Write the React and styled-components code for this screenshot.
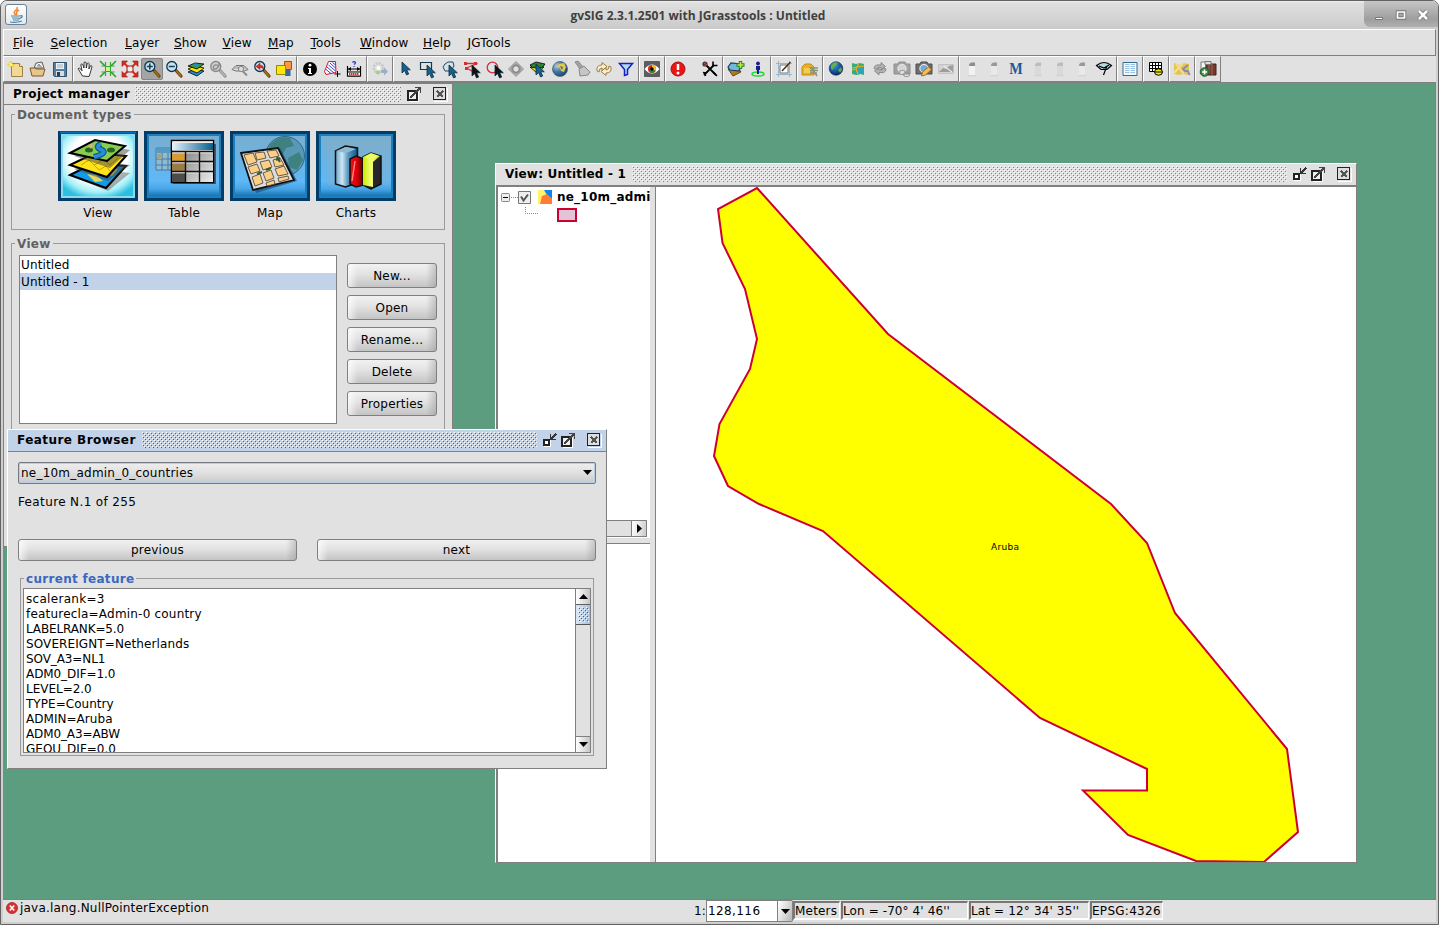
import React from 'react';
import styled, { createGlobalStyle, css } from 'styled-components';

const GlobalStyle = createGlobalStyle`
  * { box-sizing: border-box; }
  html, body { margin: 0; padding: 0; background: #fff; }
  body { font-family: "DejaVu Sans", sans-serif; font-size: 12px; color: #000; overflow: hidden; }
  svg { display: block; overflow: visible; flex: none; }
`;

const GRAY = '#808080';
const PANEL = '#e1e1e1';
const SELECT = '#c2d2e8';

/* ---------- application frame ---------- */
const Frame = styled.div`
  width: 1439px; height: 925px;
  display: flex; flex-direction: column;
  border: 1px solid #626262;
  border-radius: 7px 7px 0 0;
  background: #cfcfcf; overflow: hidden;
`;
const TitleStrip = styled.header`
  height: 28px; flex: none; display: flex; align-items: stretch;
  background: linear-gradient(#f0f0f0 0, #dfdfdf 2px, #d4d4d4 60%, #cacaca 100%);
`;
const JavaBadge = styled.div`
  width: 22px; height: 21px; margin: 3px 0 0 4px;
  border: 1px solid #68839b; border-radius: 3px;
  background: linear-gradient(#fff, #e4e9ed);
  display: flex; align-items: center; justify-content: center;
`;
const AppTitle = styled.h1`
  flex: 1; margin: 0; padding: 1px 0 0 5px; text-align: center;
  font: bold 12px/28px "Open Sans", "Noto Sans", sans-serif;
  letter-spacing: 0.03px; color: #404040;
`;
const WindowButtons = styled.div`
  width: 74px; height: 26px; display: flex; align-items: center; padding: 2px 0 0 10px;
  border-radius: 0 5px 0 6px;
  background: linear-gradient(#c6c6c6, #9e9e9e 70%, #b0b0b0);
`;
const Body = styled.div`
  flex: 1; margin: 0 2px 2px; display: flex; flex-direction: column; min-height: 0;
  background: ${PANEL};
`;
const MenuBar = styled.nav`
  height: 27px; flex: none; display: flex; align-items: center;
  border: 1px solid #fff; border-right-color: ${GRAY}; border-bottom-color: ${GRAY};
  padding: 0 0 0 9px;
`;
const MenuItem = styled.span`
  width: ${p => p.$w}px; flex: none; white-space: nowrap; letter-spacing: 0.18px;
  &::first-letter { text-decoration: underline; text-underline-offset: 1px; }
`;

/* ---------- toolbar ---------- */
const ToolBar = styled.div`
  height: 27px; flex: none; display: flex; border-bottom: 1px solid ${GRAY};
`;
const ToolGroup = styled.div`
  display: flex; align-items: center; padding: 0 1px 1px; gap: ${p => p.$gap || 0}px;
  border: 1px solid #fff; border-right-color: ${GRAY}; border-bottom-color: ${GRAY};
`;
const ToolButton = styled.div`
  width: 22px; height: 22px; display: flex; align-items: center; justify-content: center;
  ${p => p.$on && css`background: #a4a4a4; border: 1px solid #858585; border-radius: 2px;`}
`;

/* ---------- internal windows ---------- */
const Desktop = styled.main`
  flex: 1; position: relative; background: #5c9c7f; min-height: 0;
  border-right: 1px solid ${GRAY};
`;
const InternalFrame = styled.section`
  position: absolute; left: ${p => p.$x}px; top: ${p => p.$y}px;
  width: ${p => p.$w}px; height: ${p => p.$h}px;
  display: flex; flex-direction: column; background: ${PANEL};
  border: 1px solid #fff; border-right-color: ${GRAY}; border-bottom-color: ${GRAY};
  ${p => p.$flat && css`border-top-color: ${GRAY}; border-left-color: ${GRAY};`}
`;
const FrameTitle = styled.div`
  height: ${p => p.$h}px; flex: none; display: flex; align-items: center; padding: 0 5px 1px 9px;
  border-bottom: 1px solid ${GRAY}; background: ${p => (p.$active ? SELECT : PANEL)};
  font-weight: bold; white-space: nowrap;
`;
const FrameName = styled.span`letter-spacing: ${p => p.$ls}px; width: ${p => p.$w}px; flex: none;`;
const bumpTile = dark => css`
  background-image: url("data:image/svg+xml,%3Csvg xmlns='http://www.w3.org/2000/svg' width='4' height='4' shape-rendering='crispEdges'%3E%3Cpath fill='%23fff' d='M0 0h1v1H0zM2 2h1v1H2z'/%3E%3Cpath fill='%23${dark}' d='M1 1h1v1H1zM3 3h1v1H3z'/%3E%3C/svg%3E");
`;
const Bumps = styled.div`
  flex: 1; height: 16px; margin-right: 6px;
  ${p => bumpTile(p.$active ? '555f6c' : '808080')}
`;
const FrameIcons = styled.div`display: flex; gap: 4px; & > :last-child { margin-left: 8px; }`;

const Group = styled.fieldset`
  margin: ${p => p.$m}; padding: ${p => p.$p}; min-width: 0; height: ${p => p.$h}px;
  border: 1px solid #9a9a9a;
`;
const GroupName = styled.legend`
  margin-left: ${p => p.$ml ?? 3}px; padding: 0 2px; height: 15px; line-height: ${p => p.$lh || 15}px;
  font-weight: bold; color: ${p => p.$c || '#606060'}; letter-spacing: 0.3px;
`;
const DocTypes = styled.div`display: flex; justify-content: center; gap: 6px; padding-right: 2px;`;
const DocType = styled.div`display: flex; flex-direction: column; align-items: center; gap: 5px; line-height: 15px; letter-spacing: .2px;`;
const Columns = styled.div`display: flex; gap: 10px;`;
const DocList = styled.ul`
  margin: 0; padding: 0; list-style: none; width: 318px; height: 169px; flex: none;
  background: #fff; border: 1px solid ${GRAY};
`;
const DocRow = styled.li`
  height: 17px; line-height: 18px; padding-left: 1px; letter-spacing: .12px;
  background: ${p => (p.$on ? SELECT : 'transparent')};
`;
const ButtonColumn = styled.div`display: flex; flex-direction: column; gap: 7px; padding-top: 8px;`;
const Button = styled.div`
  width: ${p => p.$w}px; height: ${p => p.$h || 25}px; flex: none;
  display: flex; align-items: center; justify-content: center; letter-spacing: 0.2px;
  border: 1px solid ${GRAY}; border-radius: 3px;
  background: linear-gradient(90deg, #ffffffb0 0, #ffffff00 10px, #ffffff00 calc(100% - 10px), #9090906a 100%),
    linear-gradient(#f1f1f1 0, #e2e2e2 45%, #c4c4c4 100%);
`;

/* ---------- view window ---------- */
const ViewBody = styled.div`
  flex: 1; display: flex; min-height: 0; border-top: 1px solid ${GRAY}; border-left: 2px solid ${GRAY};
`;
const TocPane = styled.div`width: 152px; flex: none; display: flex; flex-direction: column; background: #fff;`;
const TocTree = styled.div`height: 333px; flex: none; padding-top: 1px;`;
const TocRow = styled.div`
  height: 18px; display: flex; align-items: center; padding-left: 3px; white-space: nowrap;
  font-weight: bold; letter-spacing: .22px;
`;
const TocLabel = styled.span`padding-left: 5px;`;
const HScroll = styled.div`
  height: 17px; flex: none; margin-right: 3px; display: flex; justify-content: flex-end;
  border: 1px solid ${GRAY}; background: ${PANEL};
`;
const PaneDivider = styled.div`height: 7px; flex: none; border-top: 1px solid #fff; border-bottom: 1px solid ${GRAY}; background: ${PANEL};`;
const SideDivider = styled.div`width: 6px; flex: none; background: ${PANEL}; border-right: 1px solid ${GRAY};`;
const ScrollButton = styled.div`
  width: 15px; height: 15px; flex: none;
  display: flex; align-items: center; justify-content: center;
  border-left: 1px solid ${GRAY};
  background: linear-gradient(100deg, #fff, #e2e2e2 60%, #c8c8c8);
`;
const MapPane = styled.div`flex: 1; background: #fff; overflow: hidden;`;

/* ---------- feature browser ---------- */
const BrowserBody = styled.div`flex: 1; padding: 10px 10px 0; display: flex; flex-direction: column;`;
const Combo = styled.div`
  height: 22px; flex: none; display: flex; align-items: center; justify-content: space-between;
  padding: 0 3px 1px 2px; border: 1px solid #76797f; border-radius: 2px; letter-spacing: .22px;
  box-shadow: inset 0 0 0 1px #b9cee6; background: linear-gradient(#eee, #e0e0e0 50%, #cacaca);
`;
const Counter = styled.div`height: 17px; margin: 10px 0 28px; line-height: 17px; letter-spacing: .37px;`;
const StepRow = styled.div`display: flex; gap: 20px;`;
const FeatureBox = styled.div`
  height: 165px; display: flex; background: #fff; border: 1px solid ${GRAY}; overflow: hidden;
`;
const FeatureLines = styled.div`flex: 1; padding: 3px 0 0 2px;`;
const FeatureLine = styled.div`height: 15px; line-height: 15px; letter-spacing: ${p => p.$ls}px;`;
const VScroll = styled.div`
  width: 16px; margin-right: -1px; display: flex; flex-direction: column; border: solid ${GRAY}; border-width: 0 1px; background: ${PANEL};
`;
const VScrollBtn = styled.div`
  height: 16px; flex: none; display: flex; align-items: center; justify-content: center;
  background: linear-gradient(90deg, #fff, #dedede 60%, #c4c4c4);
  border-bottom: 1px solid #606060;
  ${p => p.$end && css`margin-top: auto; border-top: 1px solid ${GRAY}; border-bottom: 0;`}
`;
const VThumb = styled.div`
  height: 20px; flex: none; padding: 2px 1px 2px 2px; display: flex; border-bottom: 1px solid #555;
  background: linear-gradient(90deg, #dbe6f3, #a9bfdb);
`;
const ThumbGrip = styled.div`flex: 1; ${bumpTile('555f6c')}`;

/* ---------- status bar ---------- */
const StatusBar = styled.footer`
  height: 23px; flex: none; display: flex; border-top: 1px solid ${GRAY};
`;
const StatusMessage = styled.div`
  width: 691px; height: 16px; display: flex; align-items: center; gap: 2px; padding-left: 3px; letter-spacing: .2px;
`;
const ScaleLabel = styled.span`width: 12px; line-height: 22px;`;
const ScaleInput = styled.div`
  width: 72px; height: 22px; line-height: 20px; padding-left: 1px; background: #fff; letter-spacing: .4px;
  border: 1px solid ${GRAY};
`;
const ScaleArrow = styled.div`
  width: 15px; height: 22px; display: flex; align-items: center; justify-content: center;
  border: 1px solid ${GRAY}; border-left: 0; border-radius: 0 2px 2px 0;
  background: linear-gradient(110deg, #fff, #ddd 50%, #b4b4b4);
`;
const StatusCell = styled.div`
  width: ${p => p.$w}px; height: 19px; margin: 1px 1px 0 0; line-height: 17px; white-space: nowrap;
  letter-spacing: ${p => p.$ls ?? 0.2}px;
  border: 1px solid #fff; border-top: 2px solid #777; border-left: 2px solid #777; border-bottom: 2px solid #fff;
`;

/* ---------- icons (16 x 16 grid) ---------- */
const Glass = ({ stroke = '#123449', fill = '#c5e3f4', handle = '#a36a1c', edge = '#5b3a0c', children }) => (
  <>
    <path d="M10.5 10l4.500 5" stroke={edge} strokeWidth="3.200" strokeLinecap="round" />
    <path d="M10.700 10.200l4.100 4.600" stroke={handle} strokeWidth="2" strokeLinecap="round" />
    <circle cx="5.800" cy="5.500" r="5" fill={fill} stroke={stroke} strokeWidth="1.300" />
    {children}
  </>
);
const Pointer = ({ x = 0, y = 0, fill = '#14638e' }) => (
  <path transform={`translate(${x} ${y})`} d="M0 0v11l2.600-2.400 2 4.400 2.100-1-2-4.200h3.600z" fill={fill} stroke="#082c42" strokeWidth=".8" />
);
const LayerStack = () => (
  <>
    <path d="M0 11l7-3 9 2-7 5z" fill="#1a8fe0" stroke="#000" strokeWidth=".8" />
    <path d="M0 8l7-3 9 2-7 5z" fill="#ffe400" stroke="#000" strokeWidth=".8" />
    <path d="M0 5l7-3 9 1-7 5z" fill="#3d9b32" stroke="#000" strokeWidth=".8" /><path d="M6 3l4 1-3 2" stroke="#268cc9" strokeWidth="1.500" fill="none" />
  </>
);
const Cyl = ({ c, cap }) => (
  <><path d="M5 14h7v1.200H4z" fill="#d2d2d2" /><path d="M5 5h6v9H5z" fill={c} /><path d="M5 5q0-3.500 3-3.500h3V5z" fill={cap} /></>
);
const Camera = ({ x = 0 }) => (
  <g transform={`translate(${x} 0)`}><path d="M0 3h4l1-2h6l1 2h4v10H0z" fill="#6e6e6e" stroke="#4d4d4d" /><circle cx="8" cy="7.500" r="4.200" fill="#ccc" stroke="#eee" /></g>
);

const icons = {
  fresh: <><path d="M3.500 2.500h8l3 3v10h-11z" fill="#f3d796" stroke="#a0803f" /><path d="M11.500 2.500v3h3" fill="#fff3cf" stroke="#a0803f" /><path d="M3 0v7M-.500 3.500h7M.800 1.300l4.400 4.400M5.200 1.300L.800 5.700" stroke="#e9c60c" strokeWidth=".9" /><circle cx="3" cy="3.500" r="1.500" fill="#fff58a" /></>,
  open: <><path d="M4 7l2-5 6-1 2 6z" fill="#ddd" stroke="#646464" /><path d="M6 5l3-3 4 4" fill="#999" stroke="#fff" /><path d="M0 7h5l1 1h9l-2 7H2z" fill="#e8c58a" stroke="#7b5826" /></>,
  save: <><path d="M1.500 1.500h13v14h-12l-1-1z" fill="#557f9e" stroke="#31546e" /><path d="M4 2h8v6H4z" fill="#e9eff3" /><path d="M5 4h6M5 6h6" stroke="#9fb0bc" /><path d="M4 10h8v5H4z" fill="#d6dde1" /><path d="M5 11h3v4H5z" fill="#273f50" /></>,
  hand: <path d="M4.500 15l-3-5-1.300-2.500q1.300-1 2.600.7l1.200 1.600L2.800 3.500q1-1.200 2 .1L6 7V1.600q1.100-1.300 2.100 0L8.300 7l1-4.700q1.200-1 1.900.3L10.900 8l1.600-3.200q1.400-.5 1.500.8l-1.800 6.500L11 15.500z" fill="#fff" stroke="#222" strokeWidth=".9" />,
  zin: <g><path d="M0 0l5 5M16 0l-5 5M0 16l5-5M16 16l-5-5" stroke="#27a02a" strokeWidth="1.500" /><path d="M1.500 5h4V1M14.500 5h-4V1M1.500 11h4v4M14.500 11h-4v4" stroke="#2aac2a" strokeWidth="1.200" fill="none" /><path d="M5.500 5.500h5v5h-5z" fill="#d5f591" stroke="#33a527" /></g>,
  zout: <g><path d="M5 5h6v6H5z" fill="#eee" stroke="#9d1f12" /><path d="M1 1l5 5M15 1l-5 5M1 15l5-5M15 15l-5-5" stroke="#d92c20" strokeWidth="2" /><path d="M0 0h5.500L0 5.500zM16 0h-5.500l5.500 5.500zM0 16h5.500L0 10.500zM16 16h-5.500l5.500-5.500z" fill="#dd2a1d" stroke="#8d1c12" strokeWidth=".6" /></g>,
  plus: <Glass><path d="M5.800 2.500v6M2.800 5.500h6" stroke="#16405c" strokeWidth="1.600" /></Glass>,
  minus: <Glass><path d="M2.800 5.500h6" stroke="#16405c" strokeWidth="1.600" /></Glass>,
  layers: <LayerStack />,
  glassGray: <Glass stroke="#888" fill="#d0d0d0" handle="#b5b5b5" edge="#858585"><path d="M3 7q1-4 4-3l2 1M9 2v3l-3 3H3" stroke="#888" strokeWidth="1.300" fill="none" /></Glass>,
  layerGray: <><path d="M0 8.500l4-4h8l4 4-4 1.500H4z" fill="#ddd" stroke="#555" strokeWidth=".8" /><path d="M4 4.500l6 5M12 4.500L6 9.500M2 7h12" stroke="#888" strokeWidth=".8" /><circle cx="9" cy="8" r="2.600" fill="#ddd" stroke="#777" strokeWidth=".8" /><path d="M11 10.500l4 4" stroke="#888" strokeWidth="1.800" /></>,
  glassBack: <Glass><path d="M2 5.500l4-3.300v2q4 0 3.500 4-1-2-3.500-1.800v2z" fill="#da2b23" stroke="#8e1b14" strokeWidth=".5" /></Glass>,
  squares: <><path d="M8.500.500h7v8h-7z" fill="#ff9640" stroke="#9f5313" /><path d="M9 8.500h5.500v6.500H9z" fill="#3b679a" /><path d="M.500 4.500h9v9h-9z" fill="#ffe808" stroke="#978507" /></>,
  info: <><circle cx="8" cy="8" r="7" fill="#000" /><circle cx="8" cy="4.200" r="1.400" fill="#fff" /><path d="M6 7h3v5h1v1H6v-1h1V8H6z" fill="#fff" /></>,
  area: <><path d="M4.500.500h7l.5 11-10 2-1.500-3z" fill="#fff" stroke="#e01627" /><path d="M3 6l7 6M4.500 4l7 6M6 2l5.500 5M2 8.500l5 4M8.500 1.500l3 2.500" stroke="#2730bb" strokeWidth=".9" /><path d="M13.500 10v6M10.500 13h6" stroke="#000" /></>,
  ruler: <><path d="M1.500 5v10h13V5M1.500 8h13" fill="none" stroke="#000" strokeWidth="1.200" /><path d="M1.500 11h13v4h-13z" fill="#fff" stroke="#000" /><path d="M3 13h10" stroke="#e42b1f" strokeWidth="2" strokeDasharray="1.500 .5" /><path d="M6.500 1.500q1.500-1.800 3 0Q9 3 8 3.500M8 5v1" stroke="#283acb" strokeWidth="1.200" fill="none" /><path d="M5 6v4L2 8zM11 6v4l3-2z" /></>,
  gear: <><circle cx="6.500" cy="7" r="4.800" fill="#ddd" stroke="#c3c9c0" strokeWidth="2.200" strokeDasharray="2 1.200" /><circle cx="6.500" cy="7" r="2" fill="#fff" /><circle cx="6" cy="11.500" r="2" fill="#a3d184" /><path d="M9 9h3V6.500l4 4-4 4V12H9z" fill="#9bb0c8" /></>,
  select: <Pointer x={4} y={1} />,
  selRect: <><path d="M.500 1.500h11v7H.500z" fill="none" stroke="#17394e" strokeWidth="1.200" /><Pointer x={7} y={4} /></>,
  selPoly: <><path d="M3 3l3-2h5l1 4-3 5H3L1 6z" fill="#d4e1e8" stroke="#24485d" /><Pointer x={7} y={4} /></>,
  selLine: <><path d="M1.500 2.500h12L2.500 7l9 5" fill="none" stroke="#cf3139" strokeWidth="1.300" /><path d="M0 1h3v3H0zM10 1h3v3h-3zM1 6h3v3H1z" fill="#cf3139" /><Pointer x={8} y={4} fill="#111" /></>,
  selCircle: <><circle cx="6.500" cy="6.500" r="5.300" fill="none" stroke="#d52d38" strokeWidth="1.300" /><Pointer x={9} y={4} fill="#111" /></>,
  buffer: <><path d="M8 .500L15.500 8 8 15.500.500 8z" fill="#b0b0b0" stroke="#999" /><circle cx="8" cy="8" r="5" fill="#999" /><circle cx="8" cy="8" r="3.300" fill="#e1e1e1" stroke="#777" /></>,
  selLayer: <><path d="M0 4l6-3 9 2-3 4-6 3z" fill="#2f852d" stroke="#000" strokeWidth=".8" /><path d="M0 6l6 1 8-1-7 6z" fill="#ffe419" stroke="#000" strokeWidth=".8" /><Pointer x={6} y={3} /></>,
  worldSel: <><circle cx="8" cy="8" r="7.500" fill="url(#ico-world)" stroke="#45586c" strokeWidth=".7" /><path d="M7 3l5-1 2 4-2 5-3-1-1-3-3-1z" fill="#dfcb45" /><path d="M8 5l3 1-1 3z" fill="#376ba0" /></>,
  broom: <><path d="M1 1l3-1 5 6-3 2z" fill="#a4a4a4" stroke="#888" /><path d="M5 8l5-3 6 6-2 3-8 1z" fill="#c5c5c5" stroke="#888" /></>,
  refresh: <><path d="M1 10q-1-6 5-6V1.500l5 4-5 4V7Q3 7 3 11z" fill="#f7edd2" stroke="#96752f" strokeWidth=".9" /><path d="M15 6q1 6-5 6v2.500l-5-4 5-4V9q3 0 3-4z" fill="#f7edd2" stroke="#96752f" strokeWidth=".9" /></>,
  filter: <path d="M1.500 2.500h13L9.500 8.500v5l-3 1v-6z" fill="#b4d9ef" stroke="#1220c4" strokeWidth="1.500" />,
  eye: <><rect width="16" height="16" rx="1" fill="#5d5d5d" /><path d="M.500 8q7.500-9 15 0-7.500 9-15 0z" fill="#fff" /><circle cx="8" cy="8" r="4" fill="#d82320" /><path d="M8 8V4a4 4 0 0 1 3.500 6z" fill="#edcc25" /><path d="M8 8l3.500 2A4 4 0 0 1 4.500 10z" fill="#278739" /><circle cx="8" cy="8" r="1.700" /></>,
  alert: <><circle cx="8" cy="8" r="7" fill="#ea1616" stroke="#a90d0d" /><path d="M8 3v6" stroke="#fff" strokeWidth="2.500" /><circle cx="8" cy="12" r="1.500" fill="#fff" /></>,
  tools: <><path d="M4 4l10 10M12 4L2 14" stroke="#000" strokeWidth="1.800" /><path d="M11 .500v4h4.500M1 11.500l2 .5.500 3M11 11l4 4" stroke="#000" fill="none" strokeWidth="1.600" /><circle cx="3" cy="3" r="2.600" fill="#333" /><path d="M1.500 3l3-1.500M2 4.500l3-1" stroke="#e34040" strokeWidth="1" /></>,
  addLayer: <><path d="M0 8l9-3 4 6-8 4z" fill="#b8761f" stroke="#4a2b0c" strokeWidth=".8" /><path d="M0 6l3-4 10 1-2 7-9-1z" fill="#71b8df" stroke="#174059" strokeWidth="1.200" /><path d="M12.500 0v8M8.500 4h8" stroke="#247f1b" strokeWidth="3.400" /><path d="M12.500 1v6M9.500 4h6" stroke="#c1e94c" strokeWidth="1.600" /></>,
  person: <><ellipse cx="8" cy="13" rx="6" ry="2" fill="none" stroke="#13de30" strokeWidth="1.500" /><circle cx="8" cy="2.500" r="1.900" fill="#171d8f" /><path d="M6 5h4v4H9v4H7V9H6z" fill="#171d8f" /></>,
  frameEdit: <><path d="M0 2.500h16M0 13.500h16M2.500 0v16M13.500 0v16" stroke="#8db2c9" strokeWidth=".9" /><path d="M4 4h8v8H4z" fill="#fff" stroke="#777" /><path d="M6 10L14.500 1" stroke="#4a3314" strokeWidth="1.500" /></>,
  grab: <><path d="M0 6l3-3h6l3 3v8H0z" fill="#e5b127" stroke="#c18e1c" /><path d="M7 7h9M8 9.500h8M8 12h7M9 6l6 9" stroke="#87917c" strokeWidth="1.400" /><path d="M2 7h6v5H2z" fill="#f6cb4e" /></>,
  globe: <><circle cx="8" cy="7.500" r="6.800" fill="url(#ico-globe)" stroke="#12253f" strokeWidth=".6" /><path d="M3 4q3-4 7-2L8 5 6 6 5 9 3 8zM10 9l3-3 1 3-2 3z" fill="#68b443" opacity=".9" /></>,
  mapColor: <><path d="M2 2l4 1 4-1 4 1v11l-4-1-4 1-4-1z" fill="#36ae76" /><path d="M8 7l6-1v7l-4 0-3 1z" fill="#2aa6b6" /><path d="M2 9l4-1 3-6M6 8l2 5M2 7l12-2" stroke="#f0a923" strokeWidth="1.200" fill="none" /></>,
  reload: <><path d="M2 7.500Q2 3 9 4V1.500l4.500 4L9 9V6.500q-4-.5-4.500 2z" fill="#b3b3b3" stroke="#7c7c7c" strokeWidth=".8" /><path d="M14 8q0 4.500-7 3.500V14l-4.500-4L7 6.800V9q4 .5 4.500-2z" fill="#b3b3b3" stroke="#7c7c7c" strokeWidth=".8" /></>,
  camLink: <g opacity=".55"><Camera /><rect x="5.500" y="9.500" width="6" height="4" rx="2" fill="#ddd" stroke="#555" /><rect x="9.500" y="11.500" width="6" height="4" rx="2" fill="none" stroke="#555" /></g>,
  camEdit: <><Camera /><circle cx="8" cy="7.500" r="3.500" fill="#74abd8" /><path d="M5.500 15l1-4 6-5 3 2.500-6 5.500z" fill="#f2bf52" stroke="#925c17" strokeWidth=".8" /></>,
  picture: <><path d="M.500 3.500h15v9H.500z" fill="#d4d4d4" stroke="#c3c3c3" /><path d="M1 11l4-4 3 1 3-3 4-1v7z" fill="#9d9d9d" /><path d="M6 5l8 6" stroke="#e6e6e6" strokeWidth="1.300" /></>,
  cyl: <Cyl c="#f2f2f2" cap="#8d8d8d" />,
  cylMid: <Cyl c="#e9e9e9" cap="#999" />,
  cylGray: <Cyl c="#d9d9d9" cap="#bcbcbc" />,
  wiper: <><path d="M.500 4.500q7.500-6 15 0L11 8.500H5z" fill="#badadd" stroke="#000" strokeWidth="1.200" /><path d="M3 5l5 2 5-3M11 5l-2 5-1.500 4" stroke="#000" fill="none" strokeWidth="1.200" /></>,
  sheet: <><path d="M1 1.500h14v13H1z" fill="#eff8fe" stroke="#376b8e" /><path d="M3 3.500h4.500M3 5.500h4.500M3 7.500h4.500M3 9.500h4.500M3 11.500h4.500M8.500 3.500H13M8.500 5.500H13M8.500 7.500H13M8.500 9.500H13M8.500 11.500H13" stroke="#8fbce2" strokeWidth=".9" /></>,
  gridTool: <><path d="M1.500 1.500h12v9h-12zM1 4.500h13M1 7.500h13M4.500 1v10M7.500 1v10M10.500 1v10" fill="#fff" stroke="#000" /><ellipse cx="10.500" cy="11" rx="4" ry="3.200" fill="#f1ed10" stroke="#000" /><path d="M7 11h7" stroke="#000" /></>,
  mapWrench: <><path d="M0 2l5 2 4-2 6 1v11l-6-1-4 1-5-1z" fill="#e5c253" /><path d="M0 12L9 2M2 3l8 10" stroke="#f6df8c" strokeWidth="2" /><path d="M14 4l-5 4 2 2h3l1.500 4" stroke="#8490ae" strokeWidth="2" fill="none" /></>,
  addModule: <><path d="M1 1h5v12H1z" fill="#f7f7f7" stroke="#777" /><path d="M6 3h10v11H6z" fill="#75382e" stroke="#45221d" /><path d="M9 4v9M12 3v11" stroke="#ad756b" strokeWidth=".8" /><path d="M5 .500h6v3H5z" fill="#ddd" stroke="#777" /><circle cx="4.500" cy="11" r="4.300" fill="#3e8645" stroke="#215d29" /><path d="M4.500 8.500v5M2 11h5" stroke="#fff" strokeWidth="1.600" /></>,
};

const SerifM = styled.span`font: bold 17px/18px "Liberation Serif", serif; color: #175b9b; transform: scaleX(.84);`;

const toolGroups = [
  ['fresh', 'open', 'save'],
  ['hand', 'zin', 'zout', 'plus', 'minus', 'layers', 'glassGray', 'layerGray', 'glassBack', 'squares'],
  ['info', 'area', 'ruler'],
  ['gear'],
  ['select', 'selRect', 'selPoly', 'selLine', 'selCircle', 'buffer', 'selLayer', 'worldSel', 'broom', 'refresh', 'filter'],
  ['eye'],
  ['alert', 'tools'],
  ['addLayer', 'person'],
  ['frameEdit'],
  ['grab'],
  ['globe', 'mapColor', 'reload', 'camLink', 'camEdit', 'picture'],
  ['cyl', 'cylMid', 'M', 'cylGray', 'cylGray', 'cylMid', 'wiper'],
  ['sheet'], ['gridTool'], ['mapWrench'], ['addModule'],
];

const Icon = ({ name }) => (
  <svg width="16" height="16" viewBox="0 0 16 16" fill="#000">
    {name === 'globe' && <radialGradient id="ico-globe" cx=".4" cy=".3" r=".75"><stop stopColor="#3b93d8" /><stop offset=".6" stopColor="#14509c" /><stop offset="1" stopColor="#0a1c4c" /></radialGradient>}
    {name === 'worldSel' && <radialGradient id="ico-world" cx=".3" cy=".3" r=".8"><stop stopColor="#b5c9d8" /><stop offset=".5" stopColor="#3f74a4" /><stop offset="1" stopColor="#1f3f6c" /></radialGradient>}
    {icons[name]}
  </svg>
);

const Arrow = ({ d = 'M0 0h9L4.500 5z', w = 9, h = 5 }) => (
  <svg width={w} height={h} viewBox={`0 0 ${w} ${h}`}><path d={d} /></svg>
);

/* ---------- internal frame controls ---------- */
const Minimize = () => (
  <svg width="14" height="14" viewBox="0 0 14 14" fill="none" shapeRendering="crispEdges">
    <path d="M1 13.500h6.500V7" stroke="#fff" /><path d="M1 7h5v5H1z" fill="#fff" stroke="#222" strokeWidth="2" />
    <path d="M7.500 1v5.500H13M8 6l5-5" stroke="#333" strokeWidth="1.500" />
  </svg>
);
const Maximize = () => (
  <svg width="14" height="14" viewBox="0 0 14 14" fill="none" shapeRendering="crispEdges">
    <path d="M1 4h9v9H1z" fill="#eee" stroke="#222" strokeWidth="2" /><path d="M11.500 5v9H2" stroke="#fff" />
    <path d="M3 11l10-10M8 .500h5.500V6" stroke="#444" strokeWidth="1.800" />
  </svg>
);
const Close = () => (
  <svg width="14" height="14" viewBox="0 0 14 14" fill="none" shapeRendering="crispEdges">
    <path d="M1 14h13V1" stroke="#fff" /><path d="M.500.500h12v12H.500z" fill="#ddd" stroke="#222" strokeWidth="1.400" />
    <path d="M4 4l6 6M10 4l-6 6" stroke="#555" strokeWidth="1.800" />
  </svg>
);
const TitleRow = ({ name, ls, w, h, active, min }) => (
  <FrameTitle $active={active} $h={h}>
    <FrameName $ls={ls} $w={w}>{name}</FrameName>
    <Bumps $active={active} />
    <FrameIcons>{min && <Minimize />}<Maximize /><Close /></FrameIcons>
  </FrameTitle>
);

/* ---------- document type tiles (80 x 70) ---------- */
const Tile = ({ id, bright, children }) => (
  <svg width="80" height="70" viewBox="0 0 80 70">
    <defs>
      <linearGradient id={`bg-${id}`} x1="0" y1="0" x2="0" y2="1">
        <stop offset="0" stopColor="#78aed0" /><stop offset=".75" stopColor="#5fb8f6" /><stop offset=".88" stopColor="#4aa6e8" /><stop offset="1" stopColor="#1574b4" />
      </linearGradient>
      <radialGradient id={`glow-${id}`} cx=".5" cy=".38" r=".68">
        <stop offset=".6" stopColor="#fff" /><stop offset=".82" stopColor="#a5f0f9" /><stop offset="1" stopColor="#2cc0e0" />
      </radialGradient>
    </defs>
    <rect width="80" height="70" fill="#003e69" />
    <rect x="3" y="3" width="74" height="64" fill={bright ? '#8fd9ec' : '#1c7fbd'} />
    <rect x="5" y="5" width="70" height="60" fill={bright ? `url(#glow-${id})` : `url(#bg-${id})`} />
    {bright && <path d="M2 1.500h76" stroke="#0070b8" strokeWidth="2" />}
    {children}
  </svg>
);
const ViewTile = () => (
  <Tile id="view" bright>
    <path d="M18 47l20-9 34 4-22 18z" fill="#555" opacity=".45" />
    <path d="M12 44l24-12 32 3-20 22z" fill="#149ae9" stroke="#000" strokeWidth="2" />
    <path d="M29 43l9 1 7 6-8 1zM49 37l11 1-6 7-7-3z" fill="#e4d85c" />
    <path d="M16 38l20-8 36 4-22 16z" fill="#444" opacity=".5" />
    <path d="M12 34l25-12 31 3-19 21z" fill="#ffe319" stroke="#000" strokeWidth="2" />
    <path d="M23 34l8-5 5 5 10-5 6 5 8-7M36 34l5 5 7-4 4 5" fill="none" stroke="#c7a100" />
    <path d="M16 25l24-12 32 6-20 18z" fill="#444" opacity=".5" />
    <path d="M12 22L37 9l30 6-18 15z" fill="#87cd50" stroke="#000" strokeWidth="2" />
    <path d="M43 13q-7 3 1 6 6 3-8 7" stroke="#0b5a99" strokeWidth="6" fill="none" /><path d="M43 13q-7 3 1 6 6 3-8 7" stroke="#298fd5" strokeWidth="3.500" fill="none" />
    <ellipse cx="31" cy="19" rx="4" ry="2.500" fill="#2a6425" /><ellipse cx="53" cy="19" rx="4" ry="2.500" fill="#2a6425" /><path d="M30 14l5-1-2 5z" fill="#efa78f" />
  </Tile>
);
const TableTile = () => (
  <Tile id="table">
    <g opacity=".6"><path d="M12 17h19v22H12z" fill="#a7bfce" stroke="#31546b" /><path d="M12 17h19v5H12z" fill="#468bae" /><path d="M12 28h18M12 34h18M18 22v17M24 22v17" stroke="#31546b" /><path d="M13 23h5v5h-5z" fill="#c69d49" /></g>
    <path d="M30 13h42v40H29z" fill="#31323d" opacity=".7" />
    <path d="M27.500 9.500h42v42h-42z" fill="#ddd" stroke="#000" strokeWidth="1.500" />
    <linearGradient id="tabhead"><stop stopColor="#e5f4fd" /><stop offset="1" stopColor="#075f91" /></linearGradient>
    <linearGradient id="cell" x1="0" y1="0" x2="1" y2="1"><stop stopColor="#8c8c8c" /><stop offset="1" stopColor="#eee" /></linearGradient>
    <path d="M28 12h41v7H28z" fill="url(#tabhead)" /><path d="M28 11h41" stroke="#fff" />
    <path d="M42 22h27v29H42z" fill="url(#cell)" />
    <path d="M28 22h13v8H28z" fill="#d99b31" /><path d="M28 32h13v8H28z" fill="#9a7c42" /><path d="M28 42h13v9H28z" fill="#4c4c4a" />
    <path d="M28 22h41M28 32h41M28 42h41" stroke="#fff" opacity=".6" />
    <path d="M27 20.500h43M27 30.500h43M27 40.500h43M41.500 20v31M55.500 20v31" stroke="#111" strokeWidth="1.400" />
  </Tile>
);
const MapTile = () => (
  <Tile id="map">
    <circle cx="55" cy="25" r="19.500" fill="#5a98b8" stroke="#346884" /><path d="M39 15q9-11 21-8l4 8-8 2-4 8-9 1zM58 27l11-6 4 8-6 10-8-3z" fill="#3d8280" />
    <path d="M14 24l36-7 17 33-41 12z" fill="#123a58" opacity=".55" />
    <path d="M11 22l37-5 16 32-41 10z" fill="#d9dde2" stroke="#111" strokeWidth="1.800" />
    <path d="M14 24l9-2 4 9-9 3zM25 22l9-1 2 6-9 2zM37 20l9-1 3 6-9 2zM18 36l9-3 3 7-9 3zM30 31l9-2 3 7-9 3zM43 29l7-2 4 7-9 2zM22 46l8-3 3 9-8 3zM33 42l8-3 3 8-8 3zM45 38l9-3 4 8-10 2zM36 52l8-3 1 4-8 2zM48 47l10-2 1 3-10 3z" fill="#fbcf85" stroke="#5e4c37" strokeWidth=".9" />
    <path d="M36 39l5-2M46 29l4-2M27 43l5-2M47 26l3 5" stroke="#375b2c" strokeWidth="2.200" />
  </Tile>
);
const ChartTile = () => (
  <Tile id="chart">
    <rect x="12" y="8" width="61" height="46" fill="#8aafc3" opacity=".35" />
    <linearGradient id="blueBar"><stop stopColor="#6ba2c6" /><stop offset=".3" stopColor="#cfe6f2" /><stop offset=".55" stopColor="#5e9cc3" /><stop offset="1" stopColor="#0b5585" /></linearGradient>
    <linearGradient id="redBar"><stop stopColor="#f70b11" /><stop offset=".5" stopColor="#d80008" /><stop offset="1" stopColor="#400" /></linearGradient>
    <linearGradient id="limeBar"><stop stopColor="#c9e800" /><stop offset=".5" stopColor="#f5ff7d" /><stop offset="1" stopColor="#c1d800" /></linearGradient>
    <path d="M19.500 20l10-5 12 2v35l-12 4-10-3z" fill="url(#blueBar)" stroke="#111" strokeWidth="1.500" /><path d="M20 20l10-4 10 2-10 4z" fill="#8dbbd5" />
    <path d="M34 28l6-3 8 3v26l-8 2-6-3z" fill="url(#redBar)" stroke="#111" strokeWidth="1.500" /><path d="M39 30l-3 20" stroke="#ff8080" strokeWidth="1.500" />
    <path d="M47 26l8-4 10 3v28l-10 5-8-4z" fill="#28262b" stroke="#111" strokeWidth="1.500" /><path d="M47 26l8-4 9 3-7 6v25l-10-2z" fill="url(#limeBar)" /><path d="M48 26l7-3 7 2-6 4z" fill="#e9fa6a" />
  </Tile>
);

const featureLines = [
  ['scalerank=3', 0.3], ['featurecla=Admin-0 country', 0.2], ['LABELRANK=5.0', -0.13], ['SOVEREIGNT=Netherlands', 0.11],
  ['SOV_A3=NL1', -0.1], ['ADM0_DIF=1.0', -0.08], ['LEVEL=2.0', -0.02], ['TYPE=Country', 0.04], ['ADMIN=Aruba', 0.04],
  ['ADM0_A3=ABW', -0.12], ['GEOU_DIF=0.0', 0],
];

const menus = [['File', 37.5], ['Selection', 74.5], ['Layer', 49], ['Show', 48.5], ['View', 45.5], ['Map', 42.5], ['Tools', 49.5], ['Window', 63], ['Help', 44.5], ['JGTools', 60]];

const ProjectManager = () => (
  <InternalFrame $x={0} $y={0} $w={450} $h={464} $flat>
    <TitleRow name="Project manager" ls={0.33} w={122} h={21} />
    <Group $m="2px 7px 0" $p="9px 0 0" $h={123}>
      <GroupName $lh={16}>Document types</GroupName>
      <DocTypes>
        <DocType><ViewTile />View</DocType>
        <DocType><TableTile />Table</DocType>
        <DocType><MapTile />Map</DocType>
        <DocType><ChartTile />Charts</DocType>
      </DocTypes>
    </Group>
    <Group $m="6px 7px 0" $p="4px 7px 0" $h={194}>
      <GroupName $lh={16} $ml={-4}>View</GroupName>
      <Columns>
        <DocList><DocRow>Untitled</DocRow><DocRow $on>Untitled - 1</DocRow></DocList>
        <ButtonColumn>
          {['New...', 'Open', 'Rename...', 'Delete', 'Properties'].map(b => <Button key={b} $w={90}>{b}</Button>)}
        </ButtonColumn>
      </Columns>
    </Group>
  </InternalFrame>
);

const ViewWindow = () => (
  <InternalFrame $x={492} $y={80} $w={862} $h={700}>
    <TitleRow name="View: Untitled - 1" ls={0.18} w={127} h={22} min />
    <ViewBody>
      <TocPane>
        <TocTree>
          <TocRow>
            <svg width="26" height="13" viewBox="0 0 26 13" fill="none">
              <rect x=".500" y="2.500" width="8" height="8" rx="1" fill="#eee" stroke="#888" /><path d="M2 6.500h5" stroke="#000" />
              <path d="M10 6.500h7" stroke="#888" strokeDasharray="1 1" />
              <path d="M17.500.500h12v12h-12z" fill="#eee" stroke="#777" /><path d="M20 5.500l2.500 4L27 3.500" stroke="#555" strokeWidth="2" />
            </svg>
            <svg width="25" height="14" viewBox="0 0 25 14">
              <path d="M11 0h14v14H11z" fill="#fff36a" /><path d="M17 0h8v9l-5-4z" fill="#1080f4" /><path d="M13 14l2-8 5-2 5 5v5z" fill="#ff7c36" />
            </svg>
            <TocLabel>ne_10m_admi</TocLabel>
          </TocRow>
          <TocRow>
            <svg width="78" height="16" viewBox="0 0 78 16">
              <path d="M24.500 0v6.500H38" fill="none" stroke="#888" strokeDasharray="1 1" />
              <path d="M57 2h18v12H57z" fill="#e2c4d6" stroke="#cc0033" strokeWidth="2" />
            </svg>
          </TocRow>
        </TocTree>
        <HScroll><ScrollButton><Arrow d="M0 0l5 4.500L0 9z" w={5} h={9} /></ScrollButton></HScroll>
        <PaneDivider />
      </TocPane>
      <SideDivider />
      <MapPane>
        <svg width="700" height="675" viewBox="656 187 700 675">
          <path d="M757 188L888 334 1111 504 1147 543 1175 613 1287 749 1298 832 1264 862 1196 861 1128 835 1083 790.500 1147 790.500 1147 769 1040 718 823 531 759 504 728 486 714 456 719.500 424 750 369 757 339 745 289 722.500 243 718 209z" fill="#ff0" stroke="#cc0033" strokeWidth="2" />
          <text x="991" y="550" fontSize="9" letterSpacing=".3">Aruba</text>
        </svg>
      </MapPane>
    </ViewBody>
  </InternalFrame>
);

const FeatureBrowser = () => (
  <InternalFrame $x={4} $y={346} $w={600} $h={340}>
    <TitleRow name="Feature Browser" ls={0.45} w={125} h={22} active min />
    <BrowserBody>
      <Combo>ne_10m_admin_0_countries<Arrow /></Combo>
      <Counter>Feature N.1 of 255</Counter>
      <StepRow><Button $w={279} $h={22}>previous</Button><Button $w={279} $h={22}>next</Button></StepRow>
      <Group $m="10px 2px 0" $p="2px 2px 0" $h={185}>
        <GroupName $c="#3a68c0" $ml={1} $lh={16}>current feature</GroupName>
        <FeatureBox>
          <FeatureLines>{featureLines.map(([t, ls]) => <FeatureLine key={t} $ls={ls}>{t}</FeatureLine>)}</FeatureLines>
          <VScroll>
            <VScrollBtn><Arrow d="M0 5h9L4.500 0z" /></VScrollBtn>
            <VThumb><ThumbGrip /></VThumb>
            <VScrollBtn $end><Arrow /></VScrollBtn>
          </VScroll>
        </FeatureBox>
      </Group>
    </BrowserBody>
  </InternalFrame>
);

export default function App() {
  return (
    <>
      <GlobalStyle />
      <Frame>
        <TitleStrip>
          <JavaBadge>
            <svg width="16" height="16" viewBox="0 0 16 16" fill="none">
              <path d="M9 0q1 2-2 4-2 2 1 4M11 3Q7 5 9 8" stroke="#ef8533" strokeWidth="1.400" />
              <path d="M3 9h9M4 11h7M5 13h6M2 15q6 1 12-1M12 9q3-1 2 1l-3 2" stroke="#5382a1" strokeWidth="1.200" />
            </svg>
          </JavaBadge>
          <AppTitle>gvSIG 2.3.1.2501 with JGrasstools : Untitled</AppTitle>
          <WindowButtons>
            <svg width="64" height="14" viewBox="0 0 64 14" fill="none">
              <path d="M1.500 9.500h7v2h-7z" fill="#fff" stroke="#777" />
              <path d="M23.500 4h7v6h-7z" stroke="#777" strokeWidth="3.500" /><path d="M23.500 4h7v6h-7z" stroke="#fff" strokeWidth="1.700" />
              <path d="M45 3l8 8M53 3l-8 8" stroke="#777" strokeWidth="4.500" /><path d="M45 3l8 8M53 3l-8 8" stroke="#fff" strokeWidth="2.500" />
            </svg>
          </WindowButtons>
        </TitleStrip>
        <Body>
          <MenuBar>{menus.map(([m, w]) => <MenuItem key={m} $w={w}>{m}</MenuItem>)}</MenuBar>
          <ToolBar>
            {toolGroups.map((g, i) => (
              <ToolGroup key={i} $gap={g[0] === 'alert' ? 10 : 0}>
                {g.map((n, j) => (
                  <ToolButton key={j} $on={n === 'plus'}>{n === 'M' ? <SerifM>M</SerifM> : <Icon name={n} />}</ToolButton>
                ))}
              </ToolGroup>
            ))}
          </ToolBar>
          <Desktop>
            <ProjectManager />
            <ViewWindow />
            <FeatureBrowser />
          </Desktop>
          <StatusBar>
            <StatusMessage>
              <svg width="12" height="12" viewBox="0 0 12 12"><circle cx="6" cy="6" r="5.500" fill="#d93236" stroke="#9d2023" strokeWidth=".8" /><path d="M3.800 3.500l4.400 5M8.200 3.500l-4.400 5" stroke="#fff" strokeWidth="1.500" /></svg>
              java.lang.NullPointerException
            </StatusMessage>
            <ScaleLabel>1:</ScaleLabel>
            <ScaleInput>128,116</ScaleInput>
            <ScaleArrow><Arrow /></ScaleArrow>
            <StatusCell $w={47}>Meters</StatusCell>
            <StatusCell $w={127} $ls={0.1}>Lon = -70° 4' 46''</StatusCell>
            <StatusCell $w={120} $ls={0.14}>Lat = 12° 34' 35''</StatusCell>
            <StatusCell $w={73} $ls={0.28}>EPSG:4326</StatusCell>
          </StatusBar>
        </Body>
      </Frame>
    </>
  );
}
